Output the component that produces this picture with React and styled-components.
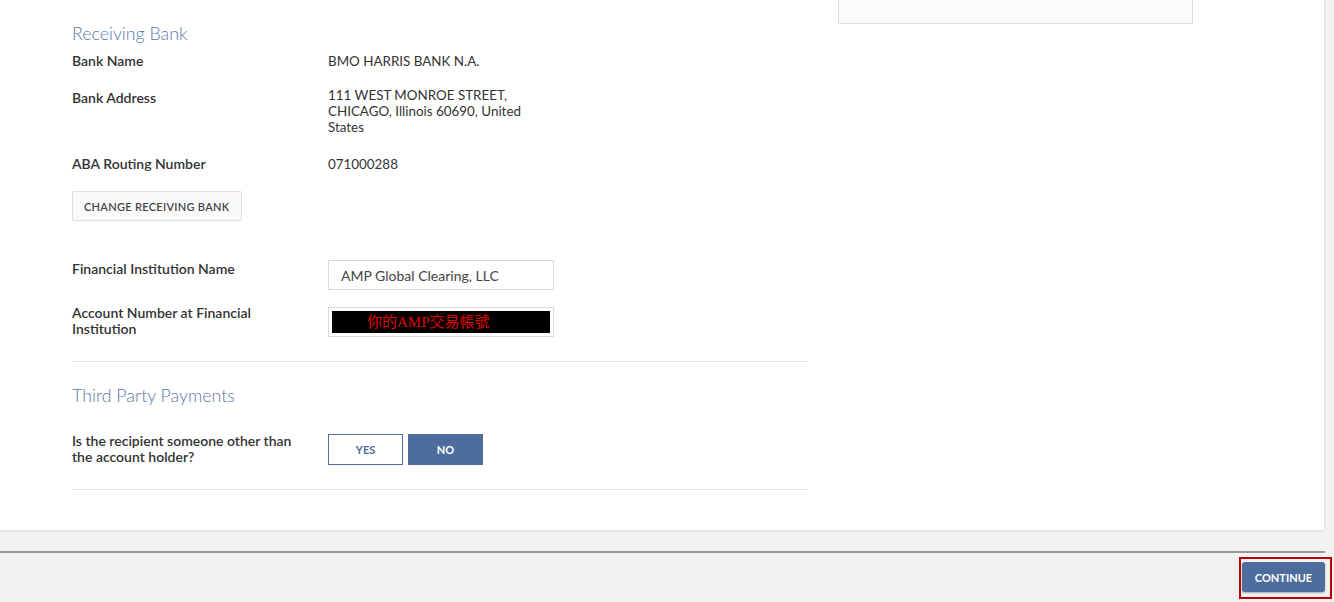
import React from "react";
import styled, { createGlobalStyle } from "styled-components";

const GlobalStyle = createGlobalStyle`
  html, body {
    margin: 0;
    padding: 0;
    background-color: #f2f2f2;
    font-family: "Lato", "Open Sans", "Noto Sans", sans-serif;
    color: #333;
  }
`;

const Page = styled.div`
  width: 1334px;
  height: 602px;
  overflow: hidden;
  background-color: #f2f2f2;
`;

const Card = styled.div`
  width: 1324px;
  background-color: #fff;
  box-shadow: 0 2px 2px rgba(0, 0, 0, 0.06), 1px 0 1px rgba(0, 0, 0, 0.05);
  display: flex;
  gap: 30px;
  padding: 0 0 40px 72px;
  box-sizing: border-box;
`;

const MainColumn = styled.div`
  width: 736px;
  padding-top: 23px;
`;

const SideColumn = styled.div`
  width: 355px;
`;

const SideBox = styled.div`
  height: 24px;
  background-color: #fbfbfb;
  border: 1px solid #dcdcdc;
  border-top: none;
  box-sizing: border-box;
`;

const SectionTitle = styled.h2`
  margin: 0;
  font-size: 17.8px;
  line-height: 20px;
  font-weight: 300;
  color: #5b78a6;
`;

const Row = styled.div`
  display: grid;
  grid-template-columns: 256px 1fr;
  align-items: ${({ $center }) => ($center ? "center" : "start")};
  margin-top: ${({ $mt }) => $mt}px;
`;

const Label = styled.div`
  font-size: 14px;
  line-height: 16px;
  font-weight: 600;
  color: #333;
  padding-top: ${({ $pt }) => $pt || 0}px;
  max-width: ${({ $max }) => ($max ? `${$max}px` : "none")};
`;

const Value = styled.div`
  font-size: 13.4px;
  line-height: 16px;
  color: #333;
  max-width: 215px;
`;

const GhostButton = styled.button`
  display: block;
  margin-top: 19px;
  height: 30px;
  padding: 0 11px;
  background-color: #fafafa;
  border: 1px solid #dedede;
  border-radius: 2px;
  font-family: inherit;
  font-size: 11px;
  font-weight: 600;
  letter-spacing: 0.3px;
  color: #444;
  text-transform: uppercase;
`;

const Input = styled.div`
  width: 226px;
  height: 30px;
  margin-top: ${({ $mt }) => $mt || 0}px;
  box-sizing: border-box;
  border: 1px solid #dadada;
  display: flex;
  align-items: center;
  padding: 0 12px;
  font-size: 14px;
  color: #444;
`;

const MaskedInput = styled(Input)`
  padding: 2px 3px;
`;

const Mask = styled.div`
  flex: 1;
  height: 22px;
  background-color: #000;
  color: #e30000;
  font-family: "Liberation Serif", "Noto Sans CJK TC", serif;
  font-size: 15px;
  line-height: 22px;
  padding-left: 35px;
  white-space: nowrap;
`;

const Divider = styled.hr`
  margin: ${({ $mt }) => $mt}px 0 0;
  border: none;
  border-top: 1px solid #e6e6e6;
`;

const TitleSpacer = styled.div`
  margin-top: ${({ $mt }) => $mt}px;
`;

const Toggle = styled.div`
  display: flex;
  gap: 5px;
`;

const ToggleButton = styled.button`
  width: 75px;
  height: 31px;
  box-sizing: border-box;
  border: 1px solid #4e6d9c;
  background-color: ${({ $active }) => ($active ? "#4e6d9c" : "#fff")};
  color: ${({ $active }) => ($active ? "#fff" : "#4e6d9c")};
  font-family: inherit;
  font-size: 11px;
  font-weight: 700;
  padding: 0;
`;

const Footer = styled.div`
  width: 1325px;
  margin-top: 21px;
  border-top: 2px solid #999;
`;

const FooterActions = styled.div`
  display: flex;
  justify-content: flex-end;
  padding-top: 4px;
`;

const Highlight = styled.div`
  border: 2px solid #b90000;
  padding: 3px 5px 5px 1px;
  margin-right: -7px;
`;

const ContinueButton = styled.button`
  width: 83px;
  height: 30px;
  border: none;
  border-radius: 3px;
  background-color: #4e6d9c;
  box-shadow: 0 1px 2px rgba(0, 0, 0, 0.3);
  color: #fff;
  font-family: inherit;
  font-size: 11px;
  font-weight: 700;
  padding: 0;
`;

const App = () => {
  return (
    <Page>
      <GlobalStyle />
      <Card>
        <MainColumn>
          <SectionTitle>Receiving Bank</SectionTitle>
          <Row $mt={10}>
            <Label>Bank Name</Label>
            <Value>BMO HARRIS BANK N.A.</Value>
          </Row>
          <Row $mt={18}>
            <Label $pt={3}>Bank Address</Label>
            <Value>111 WEST MONROE STREET, CHICAGO, Illinois 60690, United States</Value>
          </Row>
          <Row $mt={21}>
            <Label>ABA Routing Number</Label>
            <Value>071000288</Value>
          </Row>
          <GhostButton>Change Receiving Bank</GhostButton>
          <Row $mt={39}>
            <Label $pt={1}>Financial Institution Name</Label>
            <Input>AMP Global Clearing, LLC</Input>
          </Row>
          <Row $mt={15}>
            <Label $max={200}>Account Number at Financial Institution</Label>
            <MaskedInput $mt={2}>
              <Mask>你的AMP交易帳號</Mask>
            </MaskedInput>
          </Row>
          <Divider $mt={24} />
          <TitleSpacer $mt={23}>
            <SectionTitle>Third Party Payments</SectionTitle>
          </TitleSpacer>
          <Row $mt={28} $center>
            <Label $max={240}>Is the recipient someone other than the account holder?</Label>
            <Toggle>
              <ToggleButton>YES</ToggleButton>
              <ToggleButton $active>NO</ToggleButton>
            </Toggle>
          </Row>
          <Divider $mt={24} />
        </MainColumn>
        <SideColumn>
          <SideBox />
        </SideColumn>
      </Card>
      <Footer>
        <FooterActions>
          <Highlight>
            <ContinueButton>CONTINUE</ContinueButton>
          </Highlight>
        </FooterActions>
      </Footer>
    </Page>
  );
};

export default App;
